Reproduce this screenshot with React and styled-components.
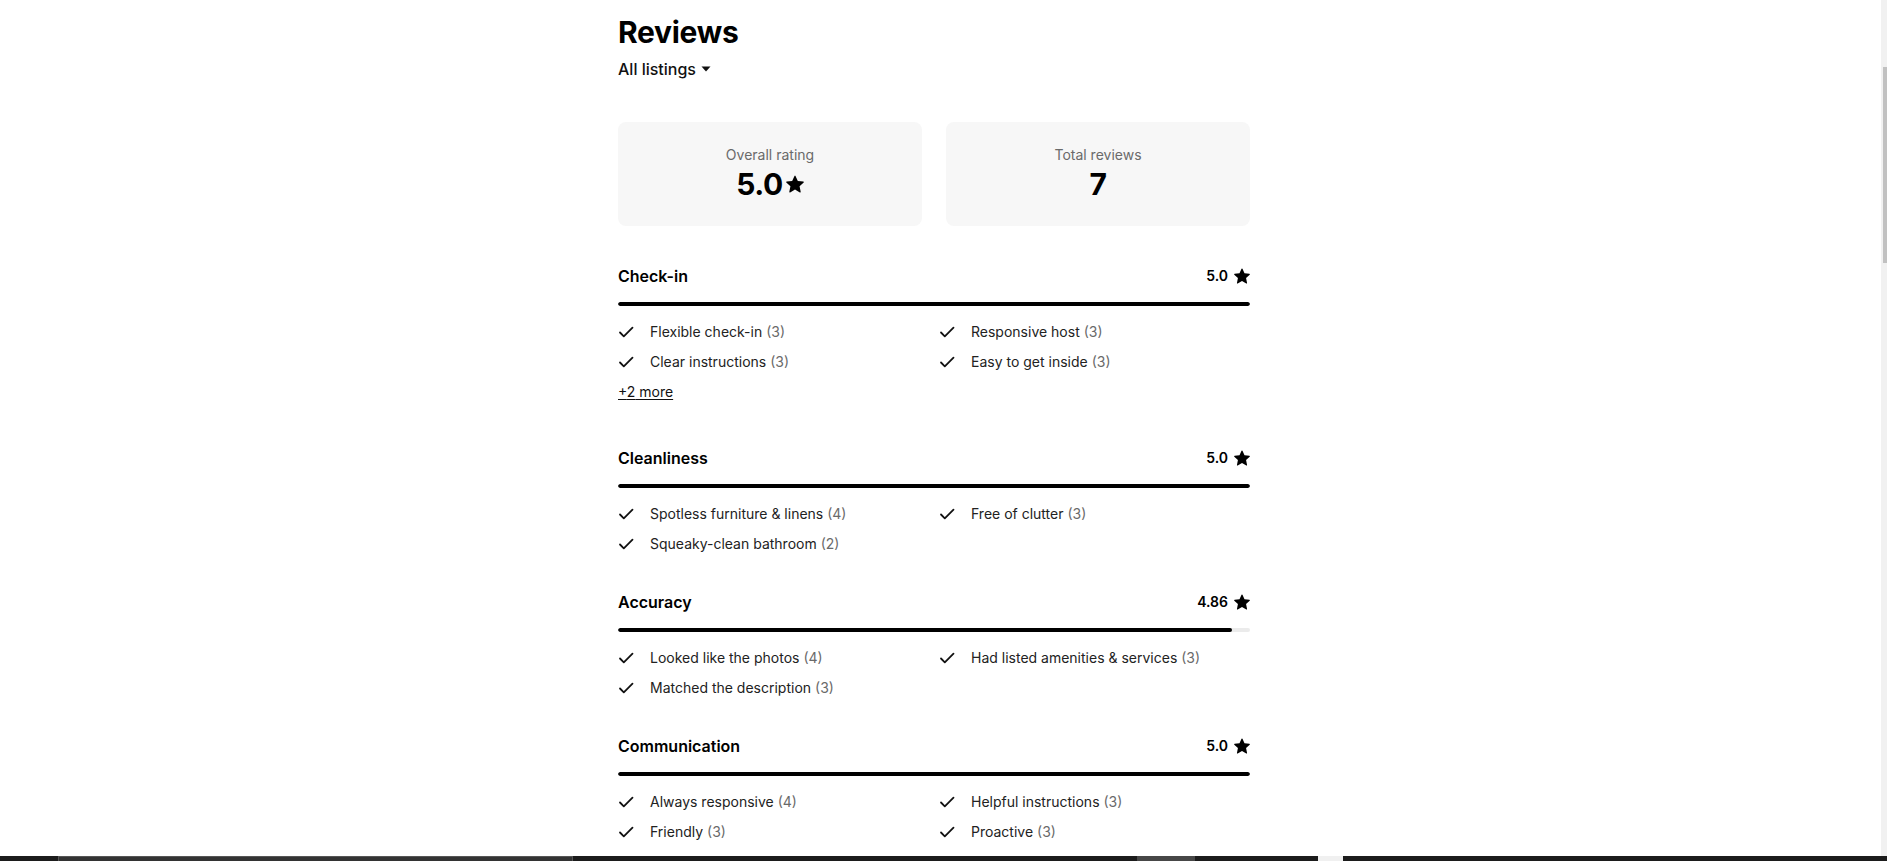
import React from "react";
import styled, { createGlobalStyle } from "styled-components";

const GlobalStyle = createGlobalStyle`
  html, body {
    margin: 0;
    padding: 0;
    background: #ffffff;
    font-family: Inter, "Noto Sans", "Liberation Sans", sans-serif;
    color: #1a1a1a;
    -webkit-font-smoothing: antialiased;
  }
`;

const Shell = styled.div`
  display: flex;
  flex-direction: column;
  height: 100vh;
  overflow: hidden;
`;

const Viewport = styled.div`
  flex: 1;
  display: flex;
  min-height: 0;
`;

const Content = styled.main`
  flex: 1;
  overflow: hidden;
  padding-left: 618px;
`;

const Column = styled.div`
  width: 632px;
  padding-top: 14px;
`;

const Title = styled.h1`
  margin: 0;
  font-size: 30px;
  line-height: 36px;
  font-weight: 700;
  letter-spacing: -0.3px;
  color: #000000;
`;

const ListingPicker = styled.button`
  display: flex;
  align-items: center;
  gap: 5px;
  margin-top: 9px;
  padding: 0;
  border: 0;
  background: none;
  font-family: inherit;
  font-size: 16px;
  line-height: 20px;
  font-weight: 500;
  color: #111111;
`;

const Summary = styled.div`
  display: grid;
  grid-template-columns: 1fr 1fr;
  column-gap: 24px;
  margin-top: 43px;
`;

const SummaryCard = styled.div`
  display: flex;
  flex-direction: column;
  align-items: center;
  padding: 24px 0 25px;
  background: #f7f7f7;
  border-radius: 8px;
`;

const CardLabel = styled.div`
  font-size: 14px;
  line-height: 18px;
  color: #6a6a6a;
`;

const CardValue = styled.div`
  display: flex;
  align-items: center;
  gap: 3px;
  margin-top: 3px;
  font-size: 30px;
  line-height: 34px;
  font-weight: 700;
  letter-spacing: -0.5px;
  color: #000000;
`;

const Sections = styled.div`
  display: flex;
  flex-direction: column;
  gap: 38px;
  margin-top: 40px;
`;

const Section = styled.section`
  display: flex;
  flex-direction: column;
`;

const SectionHead = styled.div`
  display: flex;
  align-items: center;
  justify-content: space-between;
  height: 20px;
`;

const SectionName = styled.h2`
  margin: 0;
  font-size: 16px;
  line-height: 20px;
  font-weight: 600;
  color: #000000;
`;

const Score = styled.div`
  display: flex;
  align-items: center;
  gap: 6px;
  font-size: 14px;
  line-height: 18px;
  font-weight: 600;
  color: #000000;
`;

const Track = styled.div`
  height: 4px;
  margin: 16px 0;
  border-radius: 2px;
  background: #ebebeb;
  overflow: hidden;
`;

const Fill = styled.div`
  height: 100%;
  border-radius: 2px;
  background: #000000;
`;

const Tags = styled.ul`
  display: grid;
  grid-template-columns: 1fr 1fr;
  column-gap: 10px;
  row-gap: 10px;
  margin: 0;
  padding: 0;
  list-style: none;
`;

const Tag = styled.li`
  display: flex;
  align-items: center;
  gap: 16px;
  font-size: 14px;
  line-height: 20px;
  color: #222222;
`;

const Count = styled.span`
  color: #6a6a6a;
`;

const MoreLink = styled.button`
  align-self: flex-start;
  margin: 10px 0 8px;
  padding: 0;
  border: 0;
  background: none;
  font-family: inherit;
  font-size: 14px;
  line-height: 20px;
  font-weight: 400;
  color: #111111;
  text-decoration: underline;
  text-underline-offset: 2px;
`;

const ScrollTrack = styled.div`
  display: flex;
  justify-content: flex-end;
  width: 6px;
  background: #f1f1f1;
`;

const ScrollThumb = styled.div`
  width: 4px;
  height: 196px;
  margin-top: 67px;
  background: #c1c1c1;
`;

const Taskbar = styled.div`
  display: flex;
  height: 5px;
  background: #1c1c1c;
`;

const TaskSegment = styled.div`
  box-sizing: border-box;
  width: ${(p) => p.$w}px;
  flex: ${(p) => (p.$grow ? 1 : "none")};
  background: ${(p) => p.$bg || "#1c1c1c"};
  border-top: ${(p) => (p.$edge ? "1px solid #555555" : "none")};
  border-left: ${(p) => (p.$edge ? "1px solid #555555" : "none")};
  border-right: ${(p) => (p.$edge ? "1px solid #555555" : "none")};
`;

const Star = ({ size = 15 }) => (
  <svg width={size} height={size} viewBox="0 0 32 32" fill="#000000" aria-hidden="true">
    <path d="M15.094 1.579l-4.124 8.885-9.86 1.27a1 1 0 0 0-.542 1.736l7.293 6.565-1.965 9.852a1 1 0 0 0 1.483 1.061L16 25.951l8.625 4.997a1 1 0 0 0 1.482-1.06l-1.965-9.853 7.293-6.565a1 1 0 0 0-.541-1.735l-9.86-1.271-4.127-8.885a1 1 0 0 0-1.814 0z" />
  </svg>
);

const Check = () => (
  <svg width="16" height="16" viewBox="0 0 16 16" fill="none" aria-hidden="true">
    <path d="M2 8.5l3.8 3.8L14.5 3.6" stroke="#111111" strokeWidth="1.8" strokeLinecap="round" strokeLinejoin="round" />
  </svg>
);

const Caret = () => (
  <svg width="10" height="6" viewBox="0 0 10 6" aria-hidden="true">
    <path d="M0.5 0.5h9L5 5.5z" fill="#111111" />
  </svg>
);

const categories = [
  {
    name: "Check-in",
    score: "5.0",
    value: 5,
    tags: [
      ["Flexible check-in", 3],
      ["Responsive host", 3],
      ["Clear instructions", 3],
      ["Easy to get inside", 3],
    ],
    more: 2,
  },
  {
    name: "Cleanliness",
    score: "5.0",
    value: 5,
    tags: [
      ["Spotless furniture & linens", 4],
      ["Free of clutter", 3],
      ["Squeaky-clean bathroom", 2],
    ],
  },
  {
    name: "Accuracy",
    score: "4.86",
    value: 4.86,
    tags: [
      ["Looked like the photos", 4],
      ["Had listed amenities & services", 3],
      ["Matched the description", 3],
    ],
  },
  {
    name: "Communication",
    score: "5.0",
    value: 5,
    tags: [
      ["Always responsive", 4],
      ["Helpful instructions", 3],
      ["Friendly", 3],
      ["Proactive", 3],
    ],
  },
];

const Category = ({ name, score, value, tags, more }) => (
  <Section>
    <SectionHead>
      <SectionName>{name}</SectionName>
      <Score>
        {score}
        <Star size={16} />
      </Score>
    </SectionHead>
    <Track>
      <Fill style={{ width: `${(value / 5) * 100}%` }} />
    </Track>
    <Tags>
      {tags.map(([label, count]) => (
        <Tag key={label}>
          <Check />
          <span>
            {label} <Count>({count})</Count>
          </span>
        </Tag>
      ))}
    </Tags>
    {more && <MoreLink>+{more} more</MoreLink>}
  </Section>
);

const App = () => {
  return (
    <Shell>
      <GlobalStyle />
      <Viewport>
        <Content>
          <Column>
            <Title>Reviews</Title>
            <ListingPicker>
              All listings
              <Caret />
            </ListingPicker>
            <Summary>
              <SummaryCard>
                <CardLabel>Overall rating</CardLabel>
                <CardValue>
                  5.0
                  <Star size={18} />
                </CardValue>
              </SummaryCard>
              <SummaryCard>
                <CardLabel>Total reviews</CardLabel>
                <CardValue>7</CardValue>
              </SummaryCard>
            </Summary>
            <Sections>
              {categories.map((c) => (
                <Category key={c.name} {...c} />
              ))}
            </Sections>
          </Column>
        </Content>
        <ScrollTrack>
          <ScrollThumb />
        </ScrollTrack>
      </Viewport>
      <Taskbar>
        <TaskSegment $w={58} />
        <TaskSegment $w={515} $bg="#333333" $edge />
        <TaskSegment $w={564} />
        <TaskSegment $w={58} $bg="#474747" />
        <TaskSegment $w={123} />
        <TaskSegment $w={25} $bg="#f0f0f0" />
        <TaskSegment $grow />
      </Taskbar>
    </Shell>
  );
};

export default App;
